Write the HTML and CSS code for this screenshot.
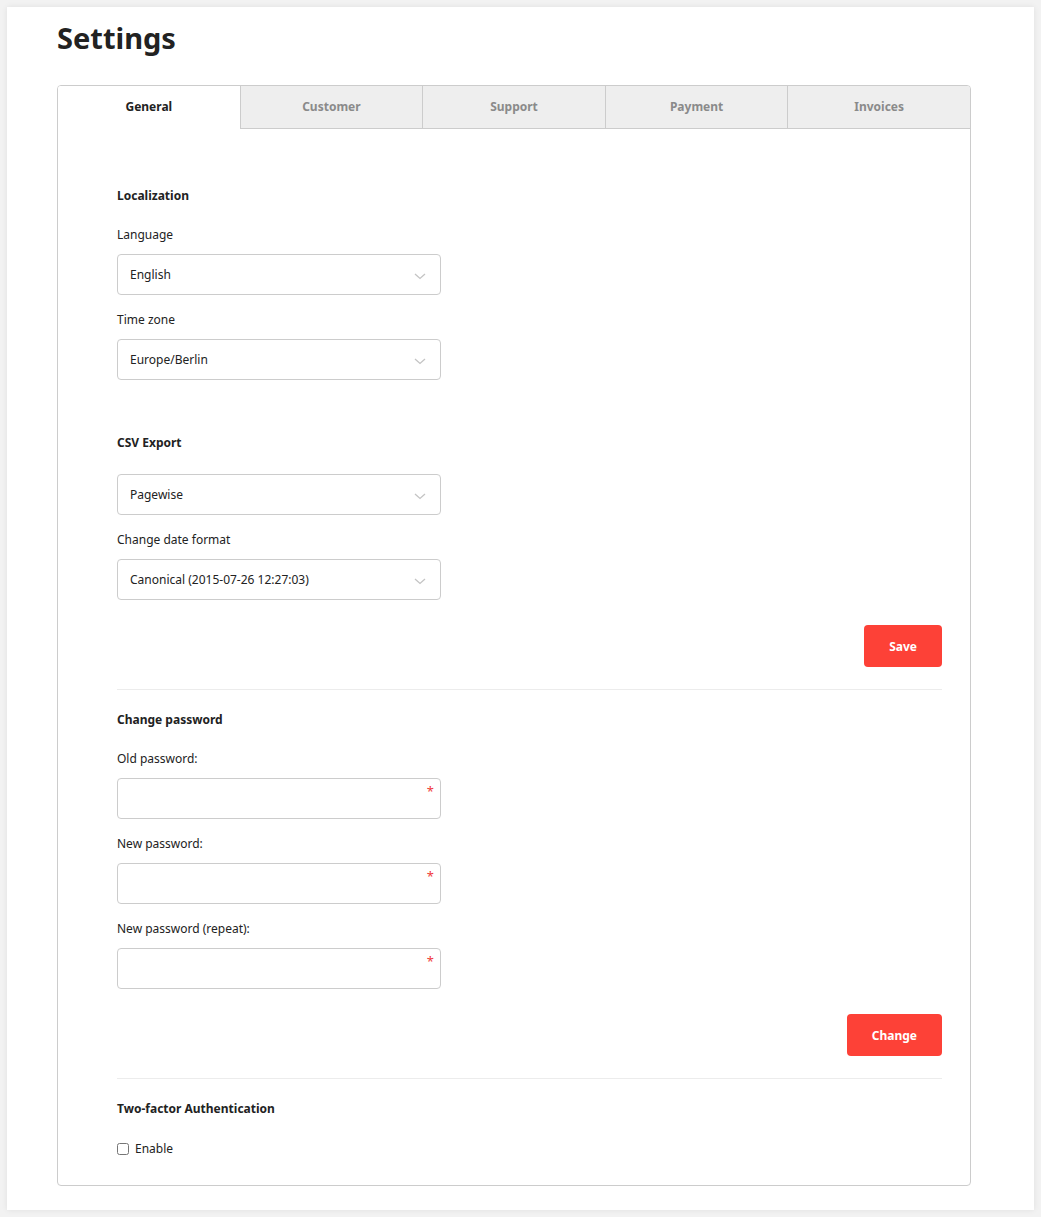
FILE: index.html
```html
<!DOCTYPE html>
<html lang="en">
<head>
  <meta charset="UTF-8">
  <meta name="viewport" content="width=device-width, initial-scale=1.0">
  <title>Settings</title>
  <link rel="stylesheet" href="styles.css">
</head>
<body>

<div class="page">
  <h1>Settings</h1>

  <div class="panel">
    <div class="tabs">
      <div class="tab active">General</div>
      <div class="tab">Customer</div>
      <div class="tab">Support</div>
      <div class="tab">Payment</div>
      <div class="tab">Invoices</div>
    </div>

    <div class="panel-body">
      <!-- Localization -->
      <h3 class="section-title">Localization</h3>
      <div class="field">
        <label>Language</label>
        <div class="select">
          <select><option>English</option></select>
          <svg class="chevron" width="12" height="7" viewBox="0 0 12 7"><path d="M1 1l5 4.5L11 1" fill="none" stroke="#c4c4c4" stroke-width="1.3"/></svg>
        </div>
      </div>
      <div class="field">
        <label>Time zone</label>
        <div class="select">
          <select><option>Europe/Berlin</option></select>
          <svg class="chevron" width="12" height="7" viewBox="0 0 12 7"><path d="M1 1l5 4.5L11 1" fill="none" stroke="#c4c4c4" stroke-width="1.3"/></svg>
        </div>
      </div>

      <!-- CSV Export -->
      <h3 class="section-title spaced no-label">CSV Export</h3>
      <div class="field">
        <div class="select">
          <select><option>Pagewise</option></select>
          <svg class="chevron" width="12" height="7" viewBox="0 0 12 7"><path d="M1 1l5 4.5L11 1" fill="none" stroke="#c4c4c4" stroke-width="1.3"/></svg>
        </div>
      </div>
      <div class="field">
        <label>Change date format</label>
        <div class="select">
          <select><option>Canonical (2015-07-26 12:27:03)</option></select>
          <svg class="chevron" width="12" height="7" viewBox="0 0 12 7"><path d="M1 1l5 4.5L11 1" fill="none" stroke="#c4c4c4" stroke-width="1.3"/></svg>
        </div>
      </div>
      <div class="actions">
        <button class="btn">Save</button>
      </div>

      <hr class="divider">

      <!-- Change password -->
      <h3 class="section-title">Change password</h3>
      <div class="field">
        <label>Old password:</label>
        <div class="input required">
          <input type="password">
        </div>
      </div>
      <div class="field">
        <label>New password:</label>
        <div class="input required">
          <input type="password">
        </div>
      </div>
      <div class="field">
        <label>New password (repeat):</label>
        <div class="input required">
          <input type="password">
        </div>
      </div>
      <div class="actions">
        <button class="btn">Change</button>
      </div>

      <hr class="divider">

      <!-- Two-factor -->
      <h3 class="section-title">Two-factor Authentication</h3>
      <label class="check">
        <input type="checkbox">
        <span>Enable</span>
      </label>
    </div>
  </div>
</div>

</body>
</html>
```

FILE: styles.css
```css
body {
  font-family: "Noto Sans", "Open Sans", sans-serif;
  background-color: #f2f2f2;
  color: #222;
  margin: 0;
  padding: 7px;
}
.page {
  background-color: #fff;
  box-shadow: 0 0 6px rgba(0, 0, 0, 0.08);
  padding: 13px 50px 24px;
}
h1 {
  font-size: 29px;
  line-height: 36px;
  font-weight: 700;
  margin: 0 0 29px;
}
.panel {
  width: 912px;
  border: 1px solid #ccc;
  border-radius: 4px;
  overflow: hidden;
}
.tabs {
  display: flex;
}
.tab {
  flex: 1;
  height: 42px;
  line-height: 42px;
  text-align: center;
  font-size: 12px;
  font-weight: 700;
  color: #8a8a8a;
  background-color: #eee;
  border-left: 1px solid #ccc;
  border-bottom: 1px solid #ccc;
}
.tab:first-child {
  border-left: none;
}
.tab.active {
  background-color: #fff;
  color: #222;
  border-bottom-color: transparent;
}
.panel-body {
  padding: 58px 28px 27px 59px;
}
.section-title {
  font-size: 12px;
  line-height: 18px;
  font-weight: 700;
  margin: 0 0 21px;
}
/* margin collapses with the field above it */
.section-title.spaced {
  margin-top: 54px;
}
.section-title.no-label {
  margin-bottom: 22px;
}
.field {
  margin-bottom: 16px;
}
.field label {
  display: block;
  font-size: 12px;
  line-height: 18px;
  margin-bottom: 10px;
}
.select,
.input {
  position: relative;
  width: 324px;
}
.select select,
.input input {
  display: block;
  width: 100%;
  height: 41px;
  box-sizing: border-box;
  border: 1px solid #ccc;
  border-radius: 4px;
  background: #fff;
  font-family: inherit;
  font-size: 12px;
  color: #222;
  padding: 0 30px 0 12px;
  appearance: none;
  -webkit-appearance: none;
  outline: none;
}
.chevron {
  position: absolute;
  right: 15px;
  top: 19px;
  pointer-events: none;
}
.input.required::after {
  content: "*";
  position: absolute;
  right: 7px;
  top: 7px;
  color: #f03a3a;
  font-size: 13px;
  line-height: 13px;
}
.actions {
  display: flex;
  justify-content: flex-end;
  margin-top: 25px;
}
.btn {
  height: 42px;
  padding: 0 25px;
  border: none;
  border-radius: 4px;
  background-color: #fd4137;
  color: #fff;
  font-family: inherit;
  font-size: 12px;
  font-weight: 700;
}
.divider {
  border: none;
  border-top: 1px solid #ececec;
  margin: 22px 0 21px;
}
.check {
  display: flex;
  align-items: center;
  font-size: 12px;
  line-height: 18px;
  margin-top: 22px;
}
.check input {
  width: 12px;
  height: 12px;
  margin: 0 6px 0 0;
}
```
